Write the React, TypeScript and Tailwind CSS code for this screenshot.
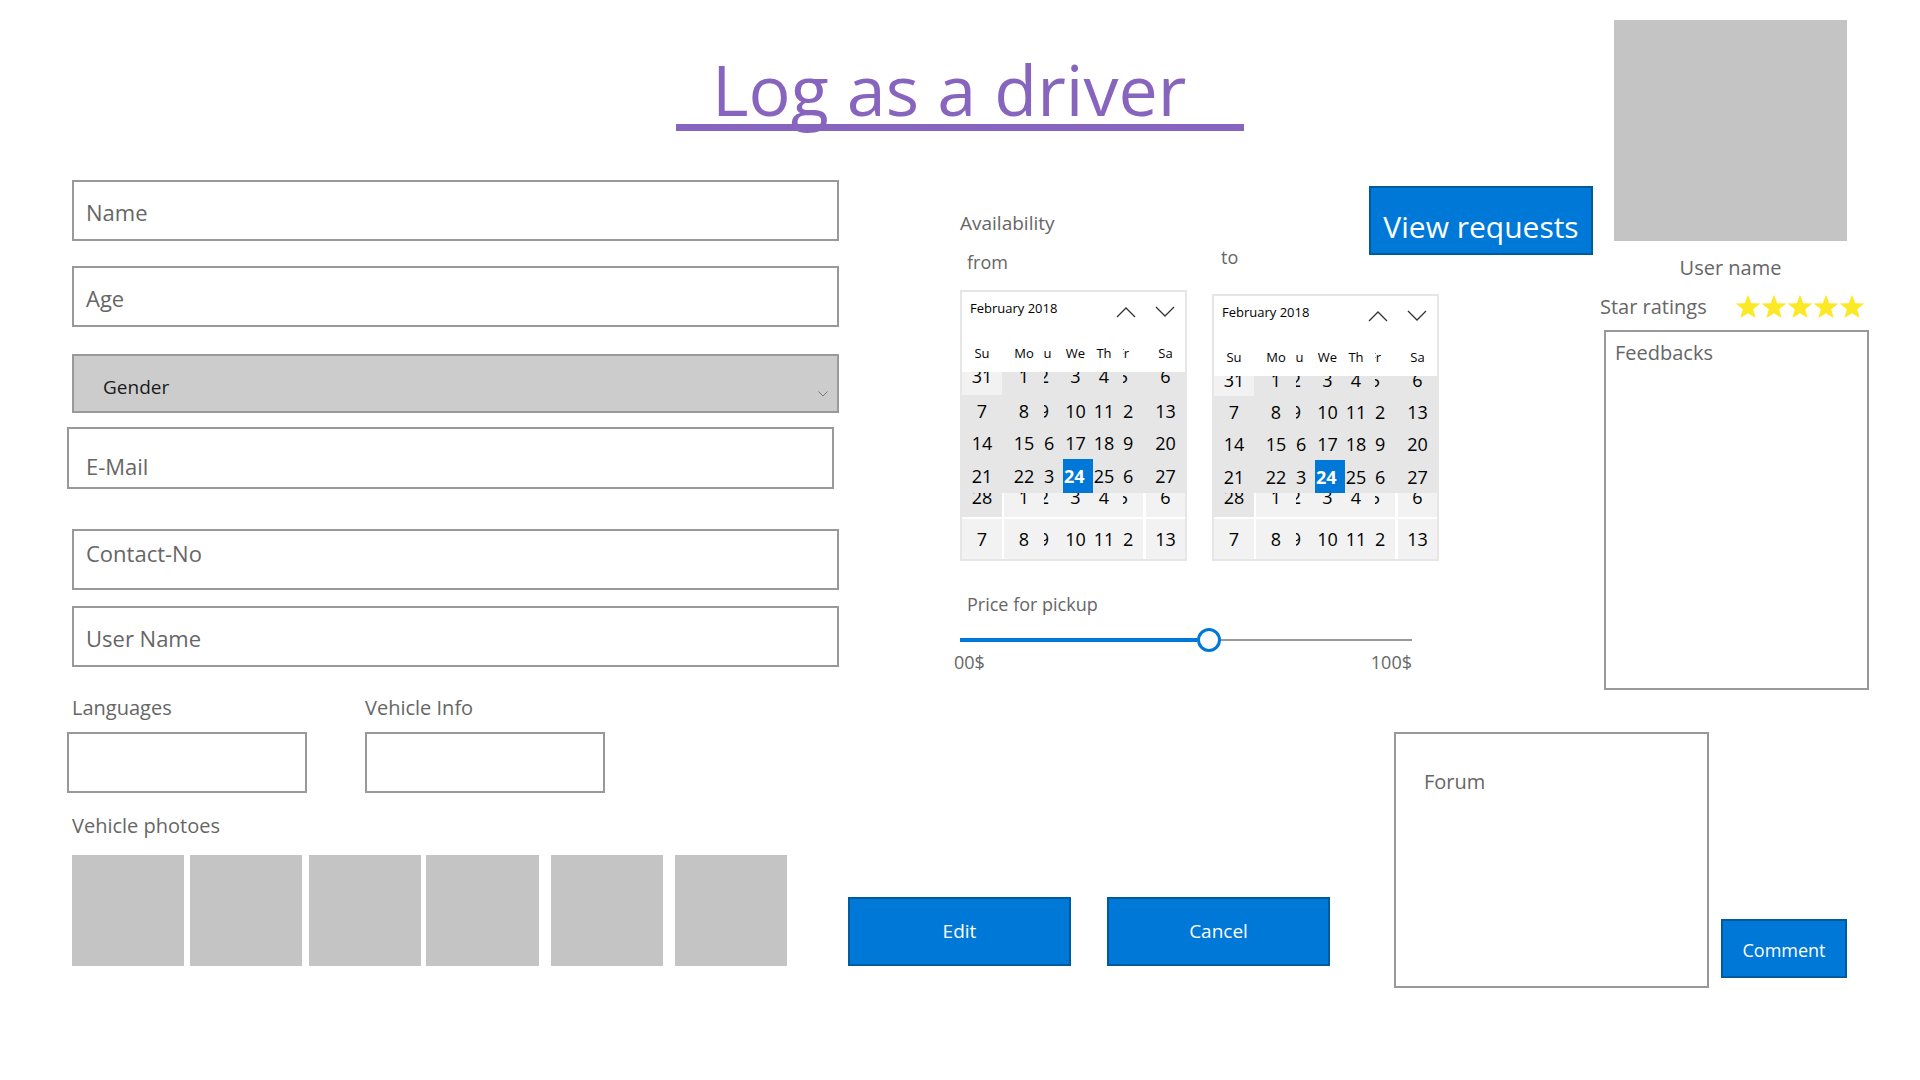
import React from 'react';

const D = 'bg-[#e6e6e6]';
const L = 'bg-[#f2f2f2]';
const W = 'bg-white';

type RowProps = {
  h: string;
  vals: string[];
  rowBg: string;
  su: string;
  g2: string;
  mid: string;
  g3: string;
  sa: string;
  clip?: boolean;
  sel?: boolean;
  small?: boolean;
};

function CalRow({ h, vals, rowBg, su, g2, mid, g3, sa, clip, sel, small }: RowProps) {
  const al = clip ? 'items-start' : 'items-center';
  const tx = clip ? '-mt-[8px]' : small ? 'pt-[2px]' : '';
  const font = small ? 'text-[13px] leading-[18px]' : 'text-[18px] leading-[24px]';
  return (
    <div className={`flex ${h} ${rowBg} overflow-hidden ${font} text-black`}>
      <div className={`w-[40px] flex justify-center ${al} ${su}`}>
        <span className={tx}>{vals[0]}</span>
      </div>
      <div className={`w-[2px] ${g2}`} />
      <div className={`w-[40px] flex justify-center ${al} ${mid}`}>
        <span className={tx}>{vals[1]}</span>
      </div>
      <div className={`w-[14px] overflow-hidden flex ${al} ${mid}`}>
        <div className={`w-[28px] -ml-[14px] shrink-0 text-center ${tx}`}>{vals[2]}</div>
      </div>
      {sel ? (
        <div className={`w-[35px] flex ${mid}`}>
          <div className="ml-[5px] w-[30px] bg-[#0078d7] text-white font-bold flex items-center pl-[1px]">
            {vals[3]}
          </div>
        </div>
      ) : (
        <div className={`w-[35px] flex justify-center ${al} ${mid}`}>
          <span className={tx}>{vals[3]}</span>
        </div>
      )}
      <div className={`w-[22px] flex justify-center ${al} ${mid}`}>
        <span className={`whitespace-nowrap ${tx}`}>{vals[4]}</span>
      </div>
      <div className={`w-[8px] ${mid}`} />
      <div className={`w-[14px] overflow-hidden flex ${al} ${mid}`}>
        <div className={`w-[28px] -ml-[14px] shrink-0 text-center ${tx}`}>{vals[5]}</div>
      </div>
      <div className={`w-[6px] ${mid}`} />
      <div className={`w-[3px] ${g3}`} />
      <div className={`w-[39px] flex justify-center ${al} ${sa}`}>
        <span className={tx}>{vals[6]}</span>
      </div>
    </div>
  );
}

function Calendar({ r0, r3 }: { r0: string; r3: string }) {
  const t = 'bg-transparent';
  return (
    <div className="w-[227px] border-2 border-[#e6e6e6] bg-white flex flex-col font-['Open_Sans',sans-serif]">
      <div className="h-[40px] flex items-start bg-white">
        <span className="ml-[8px] mt-[6px] w-[146px] text-[13px] leading-[20px] text-black whitespace-nowrap">
          February 2018
        </span>
        <svg className="mt-[14px]" width="20" height="12" viewBox="0 0 20 12">
          <polyline points="1,11 10,2 19,11" fill="none" stroke="#333" strokeWidth="1.3" />
        </svg>
        <svg className="mt-[14px] ml-[19px]" width="20" height="12" viewBox="0 0 20 12">
          <polyline points="1,1 10,10 19,1" fill="none" stroke="#333" strokeWidth="1.3" />
        </svg>
      </div>
      <CalRow
        h="h-[40px]"
        small
        vals={['Su', 'Mo', 'Tu', 'We', 'Th', 'Fr', 'Sa']}
        rowBg={W}
        su={t}
        g2={t}
        mid={t}
        g3={t}
        sa={t}
      />
      <CalRow h={r0} clip vals={['31', '1', '2', '3', '4', '5', '6']} rowBg={D} su={L} g2={t} mid={t} g3={t} sa={t} />
      <CalRow h="h-[32px]" vals={['7', '8', '9', '10', '11', '12', '13']} rowBg={D} su={t} g2={t} mid={t} g3={t} sa={t} />
      <CalRow h="h-[32px]" vals={['14', '15', '16', '17', '18', '19', '20']} rowBg={D} su={t} g2={t} mid={t} g3={t} sa={t} />
      <CalRow h={r3} sel vals={['21', '22', '23', '24', '25', '26', '27']} rowBg={D} su={t} g2={t} mid={t} g3={t} sa={t} />
      <CalRow h="h-[24px]" clip vals={['28', '1', '2', '3', '4', '5', '6']} rowBg={W} su={D} g2={W} mid={L} g3={W} sa={L} />
      <div className="h-[2px] bg-white" />
      <CalRow h="h-[40px]" vals={['7', '8', '9', '10', '11', '12', '13']} rowBg={W} su={L} g2={W} mid={L} g3={W} sa={L} />
    </div>
  );
}

function Star() {
  return (
    <svg className="-ml-[2px] first:ml-0" width="28" height="28" viewBox="0 0 24 24">
      <path
        d="M12 1.5l2.8 7.2 7.7.4-6 4.9 2 7.5L12 17.3l-6.5 4.2 2-7.5-6-4.9 7.7-.4z"
        fill="#fbe826"
      />
    </svg>
  );
}

export default function App() {
  const box = 'border-2 border-[#999999]';
  const ph = 'text-[22px] leading-[28px] text-[#666666]';
  const btn = 'shrink-0 bg-[#0078d7] border-2 border-[#005a9e] text-white';
  return (
    <div className="w-[1920px] h-[1080px] bg-white overflow-hidden font-['Open_Sans',sans-serif]">
      {/* Upper band */}
      <div className="flex h-[695px]">
        <div className="w-[1600px] flex flex-col">
          <div className="h-[131px] pt-[55px]">
            <div className="ml-[676px] w-[568px] border-b-[7px] border-[#8764bd] pl-[36px] text-[70px] leading-[69px] font-medium text-[#8764bd] whitespace-nowrap">
              Log as a driver
            </div>
          </div>
          <div className="flex">
            {/* form column */}
            <div className="ml-[67px] w-[772px] flex flex-col">
              <div className={`ml-[5px] mt-[49px] h-[61px] w-[767px] ${box} flex items-center pl-[12px] pt-[3px] ${ph}`}>
                Name
              </div>
              <div className={`ml-[5px] mt-[25px] h-[61px] w-[767px] ${box} flex items-center pl-[12px] pt-[3px] ${ph}`}>
                Age
              </div>
              <div className={`ml-[5px] mt-[27px] h-[59px] w-[767px] ${box} bg-[#cccccc] flex items-center justify-between`}>
                <span className="pl-[29px] pt-[6px] text-[19px] leading-[26px] text-[#1a1a1a]">Gender</span>
                <svg className="mr-[9px] mt-[20px]" width="10" height="6" viewBox="0 0 10 6">
                  <polyline points="0.5,0.5 5,5 9.5,0.5" fill="none" stroke="#777" strokeWidth="1" />
                </svg>
              </div>
              <div className={`mt-[14px] h-[62px] w-[767px] ${box} flex items-center pl-[17px] pt-[16px] ${ph}`}>
                E-Mail
              </div>
              <div className={`ml-[5px] mt-[40px] h-[61px] w-[767px] ${box} flex items-start pl-[12px] pt-[8px] ${ph}`}>
                Contact-No
              </div>
              <div className={`ml-[5px] mt-[16px] h-[61px] w-[767px] ${box} flex items-center pl-[12px] pt-[3px] ${ph}`}>
                User Name
              </div>
            </div>
            {/* availability column */}
            <div className="ml-[121px] w-[633px] flex flex-col">
              <div className="flex h-[105px]">
                <div className="w-[409px] pt-[79px] text-[19px] leading-[26px] text-[#666666]">Availability</div>
                <button className={`mt-[55px] w-[224px] h-[69px] pt-[12px] text-[30px] leading-none ${btn}`}>
                  View requests
                </button>
              </div>
              <div className="flex">
                <div className="w-[227px] flex flex-col">
                  <div className="ml-[7px] mt-[14px] text-[18px] leading-[24px] text-[#666666]">from</div>
                  <div className="mt-[16px]">
                    <Calendar r0="h-[23px]" r3="h-[34px]" />
                  </div>
                </div>
                <div className="ml-[25px] w-[227px] flex flex-col">
                  <div className="ml-[9px] mt-[9px] text-[18px] leading-[24px] text-[#666666]">to</div>
                  <div className="mt-[25px]">
                    <Calendar r0="h-[20px]" r3="h-[33px]" />
                  </div>
                </div>
              </div>
              <div className="ml-[7px] mt-[30px] text-[18px] leading-[26px] text-[#666666]">Price for pickup</div>
              <div className="mt-[12px] w-[452px] h-[22px] flex items-center">
                <div className="w-[237px] h-[4px] bg-[#0078d7]" />
                <div className="w-[24px] h-[24px] shrink-0 rounded-full border-[3px] border-[#0078d7] bg-white" />
                <div className="flex-1 h-[2px] bg-[#999999]" />
              </div>
              <div className="-ml-[6px] w-[458px] flex justify-between text-[18px] leading-[22px] text-[#666666]">
                <span>00$</span>
                <span>100$</span>
              </div>
            </div>
          </div>
        </div>
        {/* profile column */}
        <div className="w-[270px] pt-[20px] flex flex-col">
          <div className="ml-[14px] w-[233px] h-[221px] bg-[#c4c4c4]" />
          <div className="ml-[14px] w-[233px] mt-[13px] text-center text-[20px] leading-[28px] text-[#666666]">
            User name
          </div>
          <div className="mt-[11px] h-[28px] flex items-center">
            <span className="w-[134px] text-[20px] leading-[28px] text-[#666666]">Star ratings</span>
            <div className="flex items-center">
              <Star />
              <Star />
              <Star />
              <Star />
              <Star />
            </div>
          </div>
          <div className={`mt-[9px] ml-[4px] w-[265px] h-[360px] ${box} pl-[9px] pt-[7px] text-[20px] leading-[28px] text-[#666666]`}>
            Feedbacks
          </div>
        </div>
      </div>
      {/* Lower band */}
      <div className="flex items-start h-[385px]">
        <div className="ml-[67px] w-[720px] flex flex-col">
          <div className="flex text-[20px] leading-[26px] text-[#666666]">
            <span className="ml-[5px] w-[293px]">Languages</span>
            <span>Vehicle Info</span>
          </div>
          <div className="mt-[11px] flex">
            <div className={`w-[240px] h-[61px] ${box}`} />
            <div className={`ml-[58px] w-[240px] h-[61px] ${box}`} />
          </div>
          <div className="ml-[5px] mt-[20px] text-[20px] leading-[26px] text-[#666666]">Vehicle photoes</div>
          <div className="ml-[5px] mt-[16px] flex h-[111px]">
            <div className="w-[112px] bg-[#c4c4c4]" />
            <div className="ml-[6px] w-[112px] bg-[#c4c4c4]" />
            <div className="ml-[7px] w-[112px] bg-[#c4c4c4]" />
            <div className="ml-[5px] w-[113px] bg-[#c4c4c4]" />
            <div className="ml-[12px] w-[112px] bg-[#c4c4c4]" />
            <div className="ml-[12px] w-[112px] bg-[#c4c4c4]" />
          </div>
        </div>
        <button className={`ml-[61px] mt-[202px] w-[223px] h-[69px] text-[19px] ${btn}`}>Edit</button>
        <button className={`ml-[36px] mt-[202px] w-[223px] h-[69px] text-[19px] ${btn}`}>Cancel</button>
        <div className={`ml-[64px] mt-[37px] w-[315px] h-[256px] shrink-0 ${box} pl-[28px] pt-[34px] text-[20px] leading-[28px] text-[#666666]`}>
          Forum
        </div>
        <button className={`ml-[12px] mt-[224px] w-[126px] h-[59px] pt-[4px] text-[18px] ${btn}`}>Comment</button>
      </div>
    </div>
  );
}
